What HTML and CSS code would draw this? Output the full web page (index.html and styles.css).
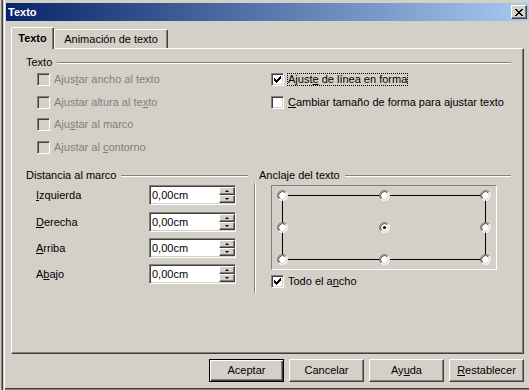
FILE: index.html
```html
<!DOCTYPE html>
<html lang="es">
<head>
<meta charset="utf-8">
<title>Texto</title>
<link rel="stylesheet" href="styles.css">
</head>
<body>
<div class="window">
  <div class="titlebar">
    <span class="title">Texto</span>
    <span class="close"><svg width="8" height="7" viewBox="0 0 8 7" shape-rendering="crispEdges"><path d="M0 0h2v1H0zM6 0h2v1H6zM1 1h2v1H1zM5 1h2v1H5zM2 2h4v1H2zM3 3h2v1H3zM2 4h4v1H2zM1 5h2v1H1zM5 5h2v1H5zM0 6h2v1H0zM6 6h2v1H6z" fill="#000"/></svg></span>
  </div>
  <div class="body">
    <div class="tabs">
      <div class="tab active">Texto</div>
      <div class="tab">Animación de texto</div>
    </div>
    <div class="panel">
      <div class="group-head"><span>Texto</span><i class="rule"></i></div>
      <div class="opts">
        <div class="col col-left">
          <div class="opt dis"><span class="cb"></span><span class="lbl">Ajus<u>t</u>ar ancho al texto</span></div>
          <div class="opt dis"><span class="cb"></span><span class="lbl">Ajustar altura al te<u>x</u>to</span></div>
          <div class="opt dis"><span class="cb"></span><span class="lbl">Aju<u>s</u>tar al marco</span></div>
          <div class="opt dis"><span class="cb"></span><span class="lbl">Ajustar al <u>c</u>ontorno</span></div>
        </div>
        <div class="col col-right">
          <div class="opt"><span class="cb"><svg width="7" height="7" viewBox="0 0 7 7" shape-rendering="crispEdges"><path d="M0 2h1v3H0zM1 3h1v3H1zM2 4h1v3H2zM3 3h1v3H3zM4 2h1v3H4zM5 1h1v3H5zM6 0h1v3H6z" fill="#000"/></svg></span><span class="lbl focus">Ajust<u>e</u> de línea en forma</span></div>
          <div class="opt"><span class="cb"></span><span class="lbl"><u>C</u>ambiar tamaño de forma para ajustar texto</span></div>
        </div>
      </div>
      <div class="lower">
        <div class="dist">
          <div class="group-head"><span>Distancia al marco</span><i class="rule"></i></div>
          <div class="frow"><span class="flabel"><u>I</u>zquierda</span><span class="spin"><span class="val">0,00cm</span><span class="arrows"><span class="sb"><i class="up"></i></span><span class="sb"><i class="down"></i></span></span></span></div>
          <div class="frow"><span class="flabel"><u>D</u>erecha</span><span class="spin"><span class="val">0,00cm</span><span class="arrows"><span class="sb"><i class="up"></i></span><span class="sb"><i class="down"></i></span></span></span></div>
          <div class="frow"><span class="flabel"><u>A</u>rriba</span><span class="spin"><span class="val">0,00cm</span><span class="arrows"><span class="sb"><i class="up"></i></span><span class="sb"><i class="down"></i></span></span></span></div>
          <div class="frow"><span class="flabel">A<u>b</u>ajo</span><span class="spin"><span class="val">0,00cm</span><span class="arrows"><span class="sb"><i class="up"></i></span><span class="sb"><i class="down"></i></span></span></span></div>
        </div>
        <i class="vsep"></i>
        <div class="anchor">
          <div class="group-head"><span>Anclaje del texto</span><i class="rule"></i></div>
          <div class="abox">
            <svg width="224" height="83" viewBox="0 0 224 83">
              <defs>
                <g id="rad">
                  <circle r="4.5" fill="#fff"/>
                  <path d="M-3.536 3.536A5 5 0 0 1 3.536 -3.536" fill="none" stroke="#808080" stroke-width="1"/>
                  <path d="M3.536 -3.536A5 5 0 0 1 -3.536 3.536" fill="none" stroke="#ffffff" stroke-width="1"/>
                  <path d="M-2.828 2.828A4 4 0 0 1 2.828 -2.828" fill="none" stroke="#404040" stroke-width="1"/>
                  <path d="M2.828 -2.828A4 4 0 0 1 -2.828 2.828" fill="none" stroke="#d4d0c8" stroke-width="1"/>
                </g>
              </defs>
              <rect x="10.5" y="9.5" width="203" height="64" fill="none" stroke="#000" stroke-width="1"/>
              <use href="#rad" x="10.5" y="9.5"/>
              <use href="#rad" x="112.5" y="9.5"/>
              <use href="#rad" x="213.5" y="9.5"/>
              <use href="#rad" x="10.5" y="41.5"/>
              <use href="#rad" x="112.5" y="41.5"/>
              <use href="#rad" x="213.5" y="41.5"/>
              <use href="#rad" x="10.5" y="73.5"/>
              <use href="#rad" x="112.5" y="73.5"/>
              <use href="#rad" x="213.5" y="73.5"/>
              <circle cx="112.5" cy="41.5" r="1.6" fill="#000"/>
            </svg>
          </div>
          <div class="opt wide"><span class="cb"><svg width="7" height="7" viewBox="0 0 7 7" shape-rendering="crispEdges"><path d="M0 2h1v3H0zM1 3h1v3H1zM2 4h1v3H2zM3 3h1v3H3zM4 2h1v3H4zM5 1h1v3H5zM6 0h1v3H6z" fill="#000"/></svg></span><span class="lbl">Todo el a<u>n</u>cho</span></div>
        </div>
      </div>
    </div>
    <div class="buttons">
      <span class="btn default">Aceptar</span>
      <span class="btn">Cancelar</span>
      <span class="btn">Ay<u>u</u>da</span>
      <span class="btn"><u>R</u>establecer</span>
    </div>
  </div>
</div>
</body>
</html>
```
FILE: styles.css
```css
html, body {
  margin: 0;
  padding: 0;
  background: #d4d0c8;
}
body {
  font-family: "Liberation Sans", Arial, sans-serif;
  font-size: 11px;
  line-height: 13px;
  color: #000;
}
u {
  text-decoration: underline;
  text-underline-offset: 1px;
}
.window {
  width: 529px;
  height: 390px;
  box-sizing: border-box;
  padding: 3px 0 0 6px;
  box-shadow:
    inset 1px 0 0 #d4d0c8,
    inset 2px 0 0 #808080,
    inset 3px 0 0 #404040,
    inset 4px 0 0 #d4d0c8,
    inset 5px 0 0 #ffffff,
    inset 0 -1px 0 #808080,
    inset 0 -2px 0 #404040;
}
.titlebar {
  height: 18px;
  display: flex;
  align-items: center;
  justify-content: space-between;
  padding: 0 2px 0 2px;
  background: linear-gradient(to right, #0a246a, #a6caf0);
}
.title {
  color: #fff;
  font-weight: bold;
}
.close {
  width: 16px;
  height: 14px;
  box-sizing: border-box;
  display: flex;
  align-items: center;
  justify-content: center;
  background: #d4d0c8;
  border: 1px solid;
  border-color: #ffffff #404040 #404040 #ffffff;
  box-shadow: inset -1px -1px 0 #808080;
}
.body {
  padding: 0 5px;
}
.tabs {
  position: relative;
  z-index: 1;
  display: flex;
  align-items: flex-end;
  height: 22px;
  margin-top: 6px;
  margin-bottom: -1px;
}
.tab {
  box-sizing: border-box;
  background: #d4d0c8;
  border-top: 1px solid #fff;
  border-left: 1px solid #fff;
  border-right: 1px solid #404040;
  box-shadow: inset -1px 0 0 #808080;
  border-radius: 2px 2px 0 0;
  text-align: center;
  width: 114px;
  height: 19px;
  padding-top: 3px;
  margin-bottom: 1px;
}
.tab.active {
  width: 43px;
  height: 22px;
  padding-top: 4px;
  margin-bottom: 0;
  font-weight: bold;
}
.panel {
  height: 306px;
  box-sizing: border-box;
  border-top: 1px solid #fff;
  border-left: 1px solid #fff;
  border-right: 1px solid #404040;
  border-bottom: 1px solid #404040;
  box-shadow: inset -1px -1px 0 #808080;
  padding: 7px 12px 0 14px;
}
.group-head {
  display: flex;
  height: 13px;
  white-space: nowrap;
}
.rule {
  flex: 1;
  height: 1px;
  margin: 6px 0 0 5px;
  border-top: 1px solid #808080;
  background: #fff;
}
.opts {
  display: flex;
  margin-top: 4px;
}
.col-left {
  width: 245px;
  padding-left: 11px;
  box-sizing: border-box;
}
.opt {
  display: flex;
  align-items: center;
  height: 13px;
  white-space: nowrap;
}
.col .opt:nth-child(2) { margin-top: 10px; }
.col .opt:nth-child(3) { margin-top: 9px; }
.col .opt:nth-child(4) { margin-top: 10px; }
.cb {
  flex: none;
  width: 13px;
  height: 13px;
  box-sizing: border-box;
  border: 1px solid;
  border-color: #808080 #ffffff #ffffff #808080;
  box-shadow: inset 1px 1px 0 #404040, inset -1px -1px 0 #d4d0c8;
  background: #fff;
  padding: 2px;
  display: flex;
}
.dis .cb {
  background: #d4d0c8;
}
.lbl {
  margin-left: 4px;
}
.dis .lbl {
  color: #808080;
}
.lbl.focus {
  margin-left: 3px;
  padding: 0 1px;
  outline: 1px dotted #000;
  outline-offset: -1px;
}
.lower {
  display: flex;
  margin-top: 15px;
}
.dist {
  width: 222px;
}
.frow {
  display: flex;
  align-items: center;
  height: 20px;
  padding-left: 10px;
  margin-top: 6px;
}
.dist .frow:nth-child(2) { margin-top: 3px; }
.dist .frow:nth-child(3) { margin-top: 7px; }
.flabel {
  width: 113px;
}
.spin {
  width: 87px;
  height: 20px;
  box-sizing: border-box;
  display: flex;
  border: 1px solid;
  border-color: #808080 #ffffff #ffffff #808080;
  box-shadow: inset 1px 1px 0 #404040, inset -1px -1px 0 #d4d0c8;
  background: #fff;
}
.val {
  flex: 1;
  padding-left: 2px;
  line-height: 18px;
}
.arrows {
  width: 16px;
  margin: 1px 0;
  display: flex;
  flex-direction: column;
}
.sb {
  flex: 1;
  box-sizing: border-box;
  background: #d4d0c8;
  border: 1px solid;
  border-color: #ffffff #404040 #404040 #ffffff;
  box-shadow: inset -1px -1px 0 #808080;
  display: flex;
  align-items: center;
  justify-content: center;
}
.up, .down {
  width: 0;
  height: 0;
  border-left: 2px solid transparent;
  border-right: 2px solid transparent;
}
.up { border-bottom: 2px solid #000; margin-bottom: 1px; }
.down { border-top: 2px solid #000; margin-bottom: 1px; }
.vsep {
  flex: none;
  width: 0;
  height: 110px;
  margin: 14px 0 0 6px;
  border-left: 1px solid #808080;
  border-right: 1px solid #fff;
}
.anchor {
  flex: 1;
  margin-left: 3px;
}
.abox {
  width: 226px;
  height: 85px;
  box-sizing: border-box;
  margin: 3px 0 0 12px;
  border: 1px solid;
  border-color: #808080 #ffffff #ffffff #808080;
}
.abox svg {
  display: block;
}
.opt.wide {
  margin: 5px 0 0 12px;
}
.buttons {
  display: flex;
  justify-content: flex-end;
  gap: 5px;
  margin-top: 5px;
}
.btn {
  width: 75px;
  height: 23px;
  box-sizing: border-box;
  border: 1px solid;
  border-color: #ffffff #404040 #404040 #ffffff;
  box-shadow: inset -1px -1px 0 #808080;
  background: #d4d0c8;
  text-align: center;
  line-height: 21px;
}
.btn.default {
  border-color: #000;
  box-shadow: inset 1px 1px 0 #fff, inset -1px -1px 0 #404040, inset -2px -2px 0 #808080;
}
```
